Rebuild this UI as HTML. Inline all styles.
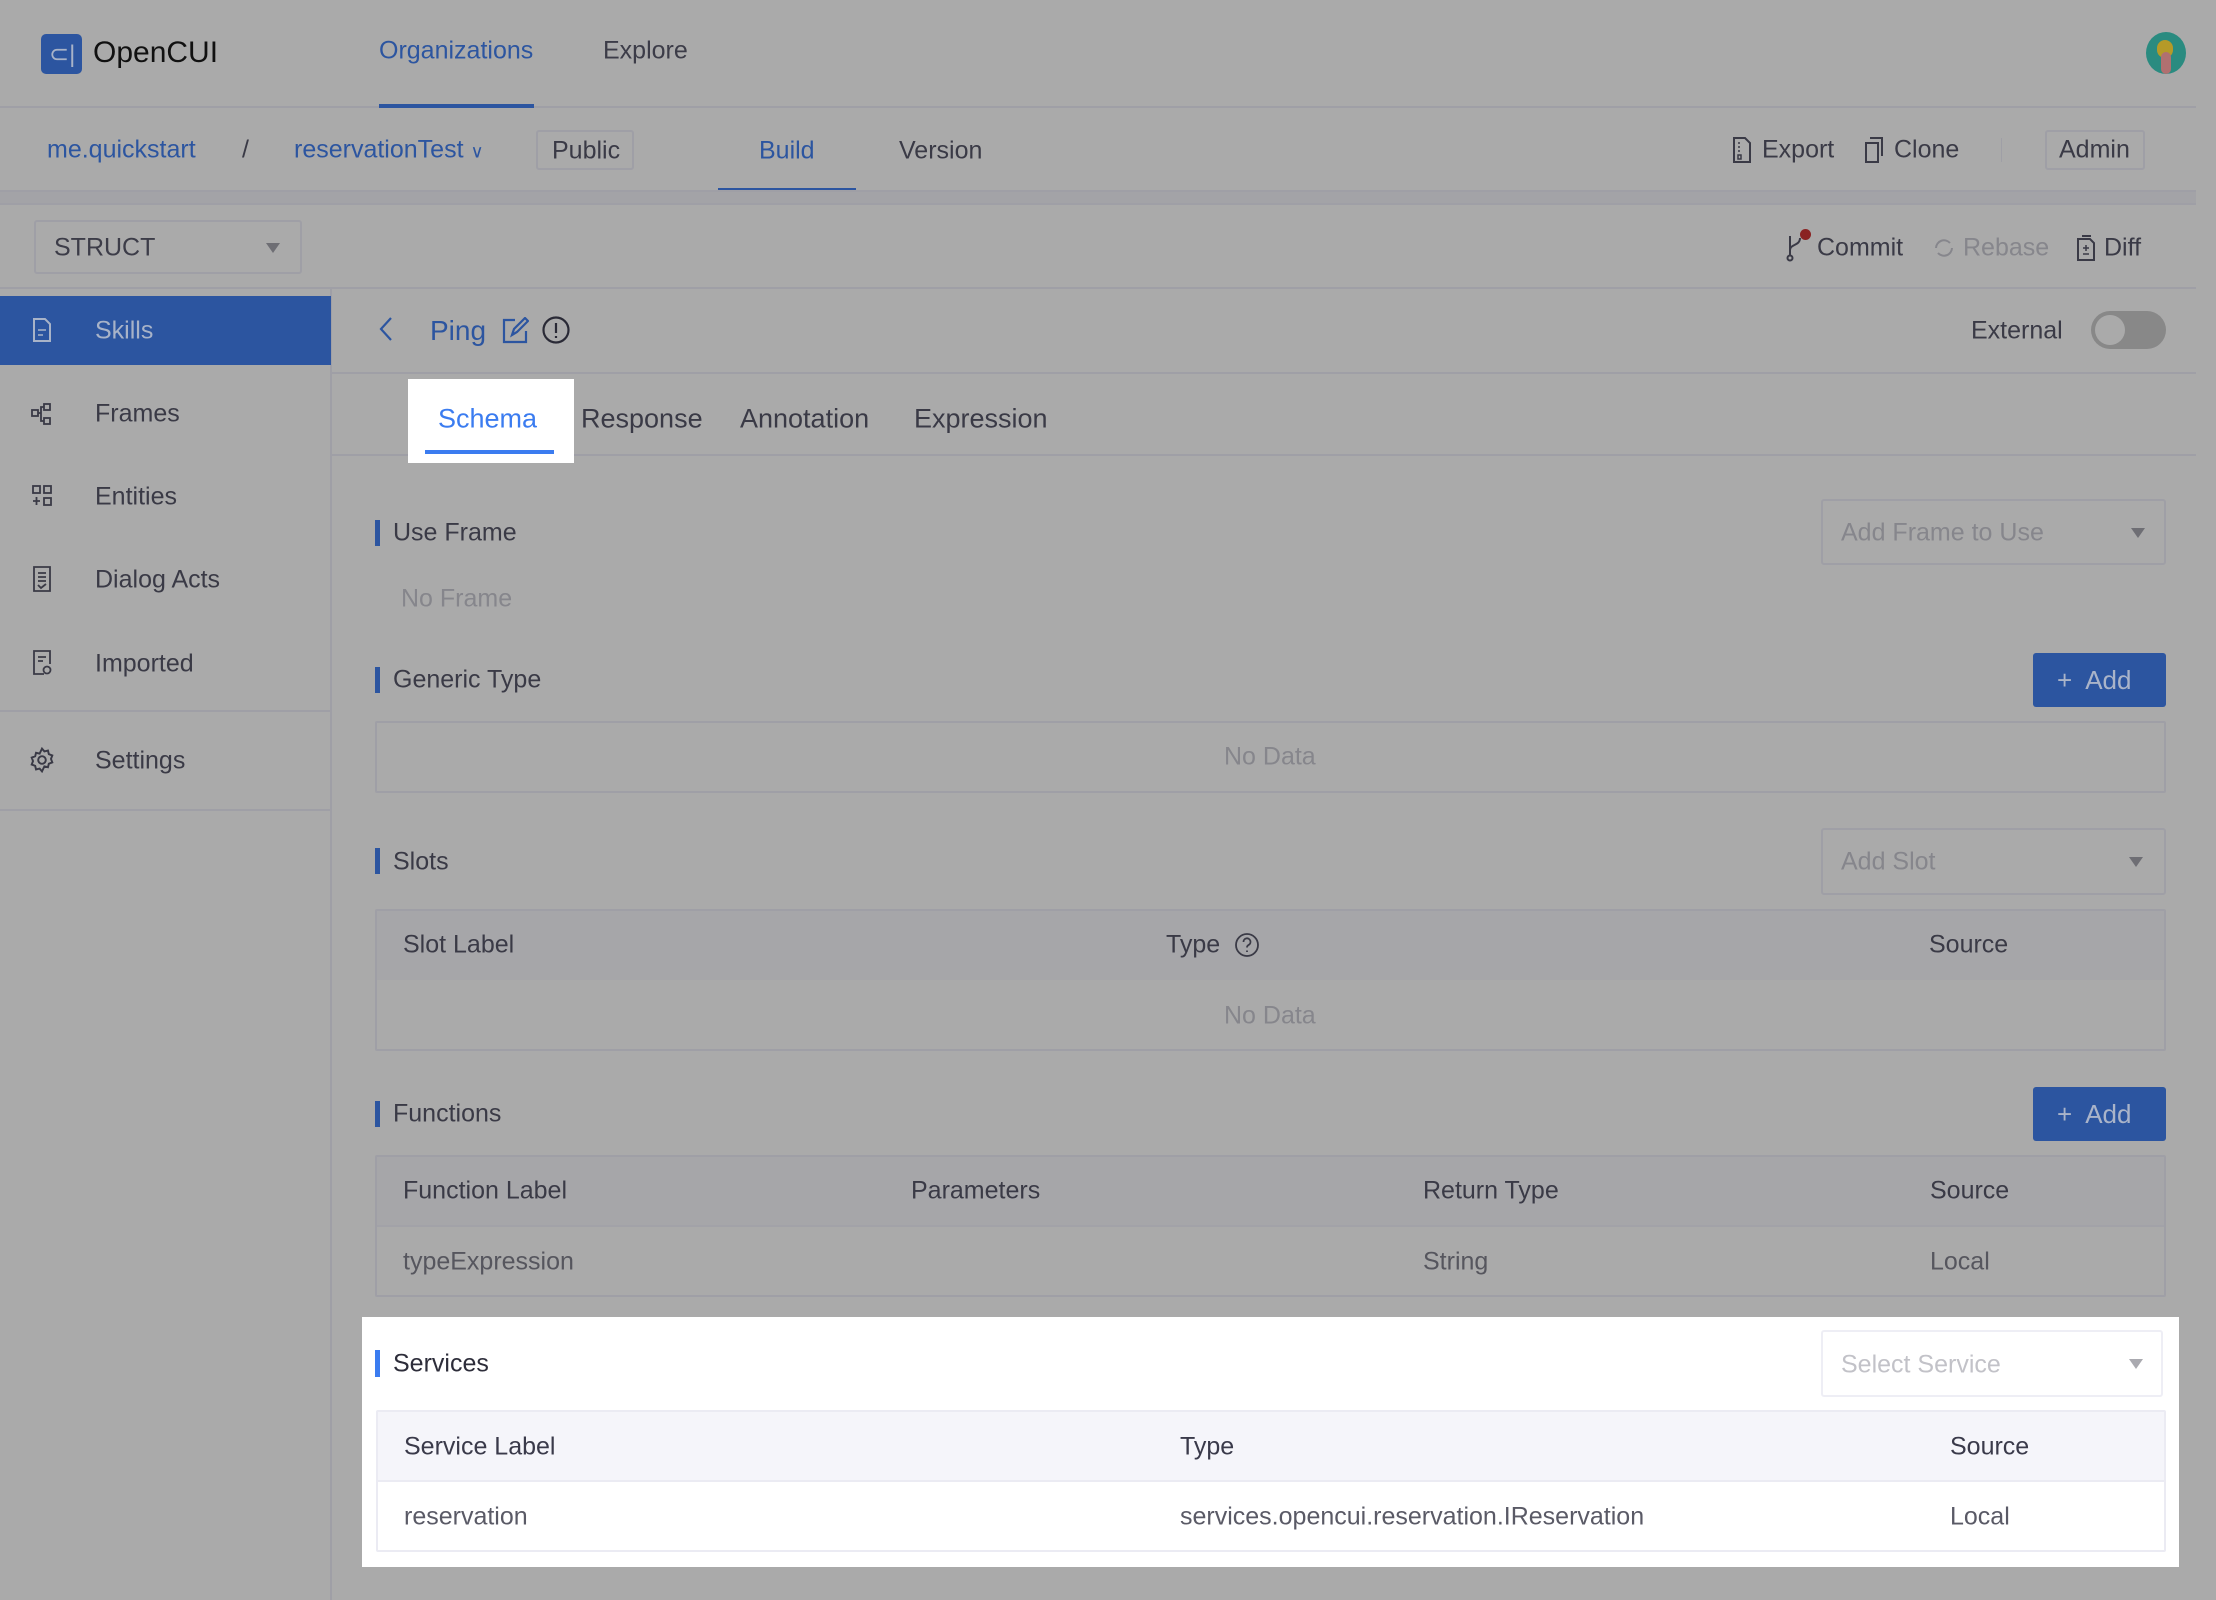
<!DOCTYPE html>
<html><head><meta charset="utf-8">
<style>
*{margin:0;padding:0;box-sizing:border-box}
body{width:2216px;height:1600px;background:#aaaaaa;font-family:"Liberation Sans",sans-serif;position:relative;overflow:hidden;color:#3a3a46}
.a{position:absolute;white-space:nowrap}
.c{position:absolute;white-space:nowrap;transform:translateY(-50%);font-size:25px;line-height:1}
.hl{position:absolute;background:#a6a6a9}
.bd{position:absolute;border:2px solid #9f9fa6}
.blue{color:#2c55a0}
.muted{color:#86868c}
.bar{position:absolute;width:5px;height:26px;background:#2c55a0}
.dd{position:absolute;border:2px solid #9f9fa6;border-radius:3px}
.tri{position:absolute;width:0;height:0;border-left:7px solid transparent;border-right:7px solid transparent;border-top:10px solid #6e6e74}
.btn{position:absolute;background:#2c55a0;border-radius:3px;color:#aab4c9}
</style></head><body>
<!-- top header -->
<div class="a" style="left:0;top:106px;width:2196px;height:2px;background:#9f9fa6"></div>
<div class="a" style="left:41px;top:34px;width:41px;height:40px;background:#2c55a0;border-radius:5px"></div>
<div class="c" style="left:49px;top:55px;font-size:24px;color:#a8b3c8">⊂|</div>
<div class="c" style="left:93px;top:53px;font-size:30px;color:#111">OpenCUI</div>
<div class="c blue" style="left:379px;top:51px">Organizations</div>
<div class="a" style="left:379px;top:104px;width:155px;height:4px;background:#2c55a0"></div>
<div class="c" style="left:603px;top:51px;color:#3c3c48">Explore</div>
<div class="a" style="left:2146px;top:32px;width:40px;height:42px;border-radius:50%;background:#2a8b80;overflow:hidden">
 <div class="a" style="left:11px;top:8px;width:16px;height:18px;border-radius:8px;background:#b59a28"></div>
 <div class="a" style="left:15px;top:20px;width:10px;height:22px;border-radius:5px;background:#b07070"></div>
</div>
<!-- row 2 -->
<div class="c blue" style="left:47px;top:150px">me.quickstart</div>
<div class="c" style="left:242px;top:150px">/</div>
<div class="c blue" style="left:294px;top:150px">reservationTest <span style="font-size:18px">∨</span></div>
<div class="bd" style="left:536px;top:130px;width:98px;height:40px;border-radius:3px"></div>
<div class="c" style="left:552px;top:151px">Public</div>
<div class="c blue" style="left:759px;top:151px">Build</div>
<div class="a" style="left:718px;top:188px;width:138px;height:4px;background:#2c55a0"></div>
<div class="c" style="left:899px;top:151px">Version</div>
<svg class="a" style="left:1732px;top:137px" width="20" height="26" viewBox="0 0 20 26" fill="none" stroke="#3a3a46" stroke-width="2"><path d="M2 1h11l5 5v19H2z"/><path d="M7 5v2M7 9v2M7 13v2M6 18h3v4H6z" stroke-width="1.5"/></svg>
<div class="c" style="left:1762px;top:150px">Export</div>
<svg class="a" style="left:1864px;top:137px" width="20" height="26" viewBox="0 0 20 26" fill="none" stroke="#3a3a46" stroke-width="2"><path d="M6 1h12v18M2 6h12v19H2z"/></svg>
<div class="c" style="left:1894px;top:150px">Clone</div>
<div class="a" style="left:2001px;top:138px;width:1px;height:24px;background:#9f9fa6"></div>
<div class="bd" style="left:2045px;top:130px;width:100px;height:40px;border-radius:3px"></div>
<div class="c" style="left:2059px;top:150px">Admin</div>
<div class="a" style="left:0;top:190px;width:2196px;height:15px;background:#a3a3a7;border-top:2px solid #9f9fa6;border-bottom:2px solid #9f9fa6"></div>
<!-- row 3 -->
<div class="dd" style="left:34px;top:220px;width:268px;height:54px"></div>
<div class="c" style="left:54px;top:248px;color:#3c3c48">STRUCT</div>
<div class="tri" style="left:266px;top:243px"></div>
<svg class="a" style="left:1786px;top:232px" width="22" height="30" viewBox="0 0 22 30" fill="none" stroke="#3a3a46" stroke-width="2"><circle cx="4" cy="26" r="2.5"/><path d="M4 23V4M4 18c0-6 10-4 10-12"/></svg>
<div class="a" style="left:1800px;top:229px;width:11px;height:11px;border-radius:50%;background:#8a2222"></div>
<div class="c" style="left:1817px;top:248px">Commit</div>
<svg class="a" style="left:1932px;top:236px" width="24" height="24" viewBox="0 0 24 24" fill="none" stroke="#86868c" stroke-width="2"><path d="M20 12a8 8 0 0 1-14 5M4 12a8 8 0 0 1 14-5"/></svg>
<div class="c muted" style="left:1963px;top:248px">Rebase</div>
<svg class="a" style="left:2076px;top:235px" width="20" height="26" viewBox="0 0 20 26" fill="none" stroke="#3a3a46" stroke-width="2"><path d="M2 4h12l4 4v17H2z"/><path d="M6 1h9" /><path d="M10 10v6M7 13h6M7 19h6" stroke-width="1.5"/></svg>
<div class="c" style="left:2104px;top:248px">Diff</div>
<div class="a" style="left:0;top:287px;width:2196px;height:2px;background:#9f9fa6"></div>
<!-- sidebar -->
<div class="a" style="left:330px;top:289px;width:2px;height:1311px;background:#9f9fa6"></div>
<div class="a" style="left:0;top:296px;width:331px;height:69px;background:#2c55a0"></div>
<svg class="a" style="left:32px;top:318px" width="20" height="24" viewBox="0 0 20 24" fill="none" stroke="#a8b3c8" stroke-width="2"><path d="M2 1h11l5 5v17H2z"/><path d="M6 12h8M6 17h5" stroke-width="1.5"/></svg>
<div class="c" style="left:95px;top:331px;color:#a8b3c8">Skills</div>
<svg class="a" style="left:30px;top:402px" width="24" height="24" viewBox="0 0 24 24" fill="none" stroke="#3a3a46" stroke-width="1.8"><rect x="2" y="8" width="6" height="6"/><rect x="14" y="2" width="6" height="6"/><rect x="14" y="16" width="6" height="6"/><path d="M8 11h3v-6h3M11 11v8h3"/></svg>
<div class="c" style="left:95px;top:414px">Frames</div>
<svg class="a" style="left:30px;top:484px" width="24" height="24" viewBox="0 0 24 24" fill="none" stroke="#3a3a46" stroke-width="1.8"><rect x="3" y="2" width="7" height="7"/><rect x="14" y="2" width="7" height="7"/><rect x="14" y="14" width="7" height="7"/><path d="M6.5 13v8M3 17h7"/></svg>
<div class="c" style="left:95px;top:497px">Entities</div>
<svg class="a" style="left:32px;top:566px" width="20" height="26" viewBox="0 0 20 26" fill="none" stroke="#3a3a46" stroke-width="1.8"><path d="M2 1h16v24H2z"/><path d="M6 7h8M6 11h8M6 15h8M6 19l3 3 5-4"/></svg>
<div class="c" style="left:95px;top:580px">Dialog Acts</div>
<svg class="a" style="left:32px;top:650px" width="20" height="26" viewBox="0 0 20 26" fill="none" stroke="#3a3a46" stroke-width="1.8"><path d="M12 24H2V1h16v13"/><path d="M6 7h8M6 11h5"/><circle cx="15" cy="20" r="3.5"/></svg>
<div class="c" style="left:95px;top:664px">Imported</div>
<div class="a" style="left:0;top:710px;width:331px;height:2px;background:#9f9fa6"></div>
<svg class="a" style="left:29px;top:747px" width="26" height="26" viewBox="0 0 24 24" fill="none" stroke="#3a3a46" stroke-width="1.8"><circle cx="12" cy="12" r="3.5"/><path d="M12 1.5l2.2 2.6 3.3-.8.8 3.3 3.2 1.2-1.2 3.2 1.2 3.2-3.2 1.2-.8 3.3-3.3-.8L12 22.5l-2.2-2.6-3.3.8-.8-3.3-3.2-1.2 1.2-3.2-1.2-3.2 3.2-1.2.8-3.3 3.3.8z"/></svg>
<div class="c" style="left:95px;top:761px">Settings</div>
<div class="a" style="left:0;top:809px;width:331px;height:2px;background:#9f9fa6"></div>
<!-- title row -->
<svg class="a" style="left:378px;top:316px" width="16" height="26" viewBox="0 0 16 26" fill="none" stroke="#2c55a0" stroke-width="2.2"><path d="M13 2L3 13l10 11"/></svg>
<div class="c blue" style="left:430px;top:331px;font-size:28px">Ping</div>
<svg class="a" style="left:501px;top:317px" width="28" height="28" viewBox="0 0 28 28" fill="none" stroke="#2c55a0" stroke-width="2.2"><path d="M14 3H3v22h22V14"/><path d="M11 18l2-6L24 1l3 3-11 11z"/></svg>
<svg class="a" style="left:541px;top:315px" width="30" height="30" viewBox="0 0 30 30" fill="none" stroke="#2a2a36" stroke-width="2.2"><circle cx="15" cy="15" r="12.5"/><path d="M15 8v10M15 21v2"/></svg>
<div class="c" style="left:1971px;top:331px">External</div>
<div class="a" style="left:2091px;top:311px;width:75px;height:38px;border-radius:19px;background:#888"></div>
<div class="a" style="left:2095px;top:315px;width:30px;height:30px;border-radius:50%;background:#aaa"></div>
<div class="a" style="left:332px;top:372px;width:1864px;height:2px;background:#9f9fa6"></div>
<!-- tabs -->
<div class="a" style="left:408px;top:379px;width:166px;height:84px;background:#fff"></div>
<div class="c" style="left:438px;top:419px;font-size:27px;color:#3b7cf0">Schema</div>
<div class="a" style="left:425px;top:450px;width:129px;height:4px;background:#3b7cf0"></div>
<div class="c" style="left:581px;top:419px;font-size:27px">Response</div>
<div class="c" style="left:740px;top:419px;font-size:27px">Annotation</div>
<div class="c" style="left:914px;top:419px;font-size:27px">Expression</div>
<div class="a" style="left:574px;top:454px;width:1622px;height:2px;background:#9f9fa6"></div>
<div class="a" style="left:332px;top:454px;width:76px;height:2px;background:#9f9fa6"></div>
<!-- Use Frame -->
<div class="bar" style="left:375px;top:520px"></div>
<div class="c" style="left:393px;top:533px">Use Frame</div>
<div class="dd" style="left:1821px;top:499px;width:345px;height:66px"></div>
<div class="c muted" style="left:1841px;top:533px">Add Frame to Use</div>
<div class="tri" style="left:2131px;top:528px"></div>
<div class="c muted" style="left:401px;top:599px">No Frame</div>
<!-- Generic Type -->
<div class="bar" style="left:375px;top:667px"></div>
<div class="c" style="left:393px;top:680px">Generic Type</div>
<div class="btn" style="left:2033px;top:653px;width:133px;height:54px"></div>
<div class="c" style="left:2057px;top:680px;color:#aab4c9;font-size:26px">+&nbsp; Add</div>
<div class="bd" style="left:375px;top:721px;width:1791px;height:72px;border-radius:2px"></div>
<div class="c muted" style="left:1224px;top:757px">No Data</div>
<!-- Slots -->
<div class="bar" style="left:375px;top:848px"></div>
<div class="c" style="left:393px;top:862px">Slots</div>
<div class="dd" style="left:1821px;top:828px;width:345px;height:67px"></div>
<div class="c muted" style="left:1841px;top:862px">Add Slot</div>
<div class="tri" style="left:2129px;top:857px"></div>
<div class="bd" style="left:375px;top:909px;width:1791px;height:142px;border-radius:2px"></div>
<div class="hl" style="left:377px;top:911px;width:1787px;height:69px"></div>
<div class="c" style="left:403px;top:945px">Slot Label</div>
<div class="c" style="left:1166px;top:945px">Type</div>
<svg class="a" style="left:1234px;top:932px" width="26" height="26" viewBox="0 0 26 26" fill="none" stroke="#3a3a46" stroke-width="1.8"><circle cx="13" cy="13" r="11"/><path d="M9.5 10a3.5 3.5 0 1 1 5 3c-1 .6-1.5 1.2-1.5 2.5M13 18.5v1.5"/></svg>
<div class="c" style="left:1929px;top:945px">Source</div>
<div class="c muted" style="left:1224px;top:1016px">No Data</div>
<!-- Functions -->
<div class="bar" style="left:375px;top:1101px"></div>
<div class="c" style="left:393px;top:1114px">Functions</div>
<div class="btn" style="left:2033px;top:1087px;width:133px;height:54px"></div>
<div class="c" style="left:2057px;top:1114px;color:#aab4c9;font-size:26px">+&nbsp; Add</div>
<div class="bd" style="left:375px;top:1155px;width:1791px;height:142px;border-radius:2px"></div>
<div class="hl" style="left:377px;top:1157px;width:1787px;height:68px"></div>
<div class="a" style="left:377px;top:1225px;width:1787px;height:2px;background:#a2a2a8"></div>
<div class="c" style="left:403px;top:1191px">Function Label</div>
<div class="c" style="left:911px;top:1191px">Parameters</div>
<div class="c" style="left:1423px;top:1191px">Return Type</div>
<div class="c" style="left:1930px;top:1191px">Source</div>
<div class="c" style="left:403px;top:1262px;color:#56565e">typeExpression</div>
<div class="c" style="left:1423px;top:1262px;color:#56565e">String</div>
<div class="c" style="left:1930px;top:1262px;color:#56565e">Local</div>
<!-- Services (highlighted) -->
<div class="a" style="left:362px;top:1317px;width:1817px;height:250px;background:#fff"></div>
<div class="a" style="left:375px;top:1350px;width:5px;height:27px;background:#3b7cf0"></div>
<div class="c" style="left:393px;top:1364px;color:#2d2d3a">Services</div>
<div class="a" style="left:1821px;top:1330px;width:342px;height:67px;border:2px solid #eeeef5;border-radius:3px"></div>
<div class="c" style="left:1841px;top:1365px;color:#c2c2c8">Select Service</div>
<div class="a" style="left:2129px;top:1359px;width:0;height:0;border-left:7px solid transparent;border-right:7px solid transparent;border-top:10px solid #aaaab0"></div>
<div class="a" style="left:376px;top:1410px;width:1790px;height:142px;border:2px solid #ebebf3;border-radius:2px"></div>
<div class="a" style="left:378px;top:1412px;width:1786px;height:68px;background:#f5f5fa"></div>
<div class="a" style="left:378px;top:1480px;width:1786px;height:2px;background:#ebebf3"></div>
<div class="c" style="left:404px;top:1447px;color:#3a3a4a">Service Label</div>
<div class="c" style="left:1180px;top:1447px;color:#3a3a4a">Type</div>
<div class="c" style="left:1950px;top:1447px;color:#3a3a4a">Source</div>
<div class="c" style="left:404px;top:1517px;color:#5a5a66">reservation</div>
<div class="c" style="left:1180px;top:1517px;color:#5a5a66">services.opencui.reservation.IReservation</div>
<div class="c" style="left:1950px;top:1517px;color:#5a5a66">Local</div>
</body></html>
